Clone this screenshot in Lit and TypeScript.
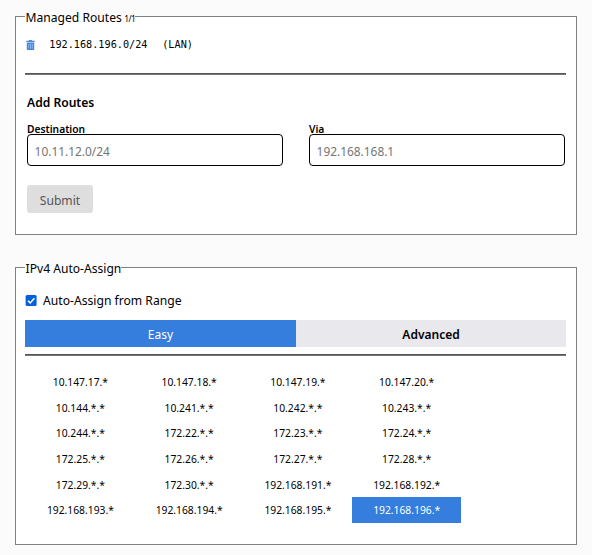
import { LitElement, html, css } from "lit";
import { customElement, state } from "lit/decorators.js";
import { classMap } from "lit/directives/class-map.js";

const RANGES = [
  "10.147.17.*", "10.147.18.*", "10.147.19.*", "10.147.20.*",
  "10.144.*.*", "10.241.*.*", "10.242.*.*", "10.243.*.*",
  "10.244.*.*", "172.22.*.*", "172.23.*.*", "172.24.*.*",
  "172.25.*.*", "172.26.*.*", "172.27.*.*", "172.28.*.*",
  "172.29.*.*", "172.30.*.*", "192.168.191.*", "192.168.192.*",
  "192.168.193.*", "192.168.194.*", "192.168.195.*", "192.168.196.*",
];

@customElement("app-root")
export class AppRoot extends LitElement {
  @state() private selected = "192.168.196.*";
  @state() private tab = "Easy";

  static styles = css`
    :host {
      display: block;
      box-sizing: border-box;
      height: 555px;
      padding: 7px 15px 0;
      background: #fbfbfb;
      color: #000;
      font-family: "Noto Sans", "Open Sans", sans-serif;
      font-size: 12px;
      overflow: hidden;
    }
    * { box-sizing: border-box; }
    .panel {
      margin: 0;
      min-width: 0;
      width: 562px;
      padding: 0 10px 0 9px;
      border: 1px solid #808080;
      background: #fff;
    }
    .routes { height: 228px; }
    .assign { height: 287px; margin-top: 23px; }
    .legend {
      height: 19px;
      padding: 0 0 0 .6px;
      line-height: 22px;
      font-size: 12.1px;
      white-space: nowrap;
    }
    .count { font-size: 8.5px; margin-left: 2.5px; letter-spacing: -0.6px; }
    .route {
      display: flex;
      align-items: center;
      height: 37px;
      padding-left: 1px;
      font: 10.2px/14px "DejaVu Sans Mono", "Liberation Mono", monospace;
      white-space: pre;
    }
    .trash { display: block; width: 9px; height: 10px; margin-right: 14.3px; }
    .target { margin-right: 14.8px; }
    .rule { height: 2px; margin-top: 10px; background: linear-gradient(#555 50%, #777 50%); }
    .heading { margin: 19px 0 0 2px; font-size: 12.1px; line-height: 18px; font-weight: 600; }
    .fields { display: flex; gap: 26px; margin: 11px 0 0 2px; }
    .field { display: block; width: 256px; }
    .label { display: block; height: 11px; font-size: 10.25px; line-height: 12px; font-weight: 600; }
    .input {
      display: block;
      width: 100%;
      height: 32px;
      padding: 2px 7px 0 6.6px;
      border: 1px solid #000;
      border-radius: 4px;
      background: #fff;
      font: inherit;
      font-size: 11.9px;
      outline: none;
    }
    .input::placeholder { color: #757575; opacity: 1; }
    .submit {
      display: block;
      width: 66px;
      height: 28px;
      margin: 19px 0 0 2px;
      padding: 3px 0 0;
      border: 0;
      border-radius: 3px;
      background: #dedede;
      color: #555;
      font: inherit;
      font-size: 12.1px;
    }
    .check { display: flex; align-items: center; height: 18px; margin-top: 14px; font-size: 12.15px; }
    .box { display: block; width: 12px; height: 11px; margin-right: 6px; }
    .tabs { display: grid; grid-template-columns: 271px 270px; height: 27px; margin-top: 11px; }
    .tab {
      padding: 2px 0 0;
      border: 0;
      background: #e9e8ed;
      color: #000;
      font: 600 12px "Noto Sans", sans-serif;
    }
    .active { background: #357edd; color: #fff; font-weight: 400; }
    .tabs + .rule { margin-top: 7px; }
    .ranges {
      display: grid;
      grid-template-columns: repeat(4, 108.75px);
      grid-auto-rows: 25.65px;
      margin: 13.2px 0 0 1px;
    }
    .range {
      display: flex;
      align-items: center;
      justify-content: center;
      font-size: 10.3px;
      cursor: pointer;
    }
    .chosen { background: #357edd; color: #fff; }
  `;

  private renderTab(name: string) {
    return html`<button class=${classMap({ tab: true, active: this.tab === name })}
      @click=${() => (this.tab = name)}>${name}</button>`;
  }

  private renderRange(range: string) {
    return html`<div class=${classMap({ range: true, chosen: this.selected === range })}
      @click=${() => (this.selected = range)}>${range}</div>`;
  }

  render() {
    return html`
      <fieldset class="panel routes">
        <legend class="legend">Managed Routes<span class="count">1/1</span></legend>
        <div class="route">
          <svg class="trash" viewBox="0 0 9 10">
            <path d="M.3 .8h2.6V0h3.2v.8h2.6v1.1H.3z" fill="#4b8be0" />
            <path d="M.8 2.4h7.4V9.3q0 .7-.7.7h-6q-.7 0-.7-.7z" fill="#4287df" />
            <path d="M2.7 3.8v4.8M4.5 3.8v4.8M6.3 3.8v4.8" stroke="#a9c9f3" stroke-width=".7" />
          </svg>
          <span class="target">192.168.196.0/24</span><span>(LAN)</span>
        </div>
        <div class="rule"></div>
        <div class="heading">Add Routes</div>
        <div class="fields">
          <label class="field"><span class="label">Destination</span><input class="input" placeholder="10.11.12.0/24" /></label>
          <label class="field"><span class="label">Via</span><input class="input" placeholder="192.168.168.1" /></label>
        </div>
        <button class="submit" disabled>Submit</button>
      </fieldset>
      <fieldset class="panel assign">
        <legend class="legend">IPv4 Auto-Assign</legend>
        <div class="check">
          <svg class="box" viewBox="0 0 12 11">
            <rect x=".6" width="11" height="11" rx="1.5" fill="#0560dd" />
            <path d="M3 5.7 5.2 7.9 9.4 3.2" fill="none" stroke="#fff" stroke-width="1.5" />
          </svg>
          <span>Auto-Assign from Range</span>
        </div>
        <div class="tabs">${this.renderTab("Easy")}${this.renderTab("Advanced")}</div>
        <div class="rule"></div>
        <div class="ranges">${RANGES.map((r) => this.renderRange(r))}</div>
      </fieldset>
    `;
  }
}
